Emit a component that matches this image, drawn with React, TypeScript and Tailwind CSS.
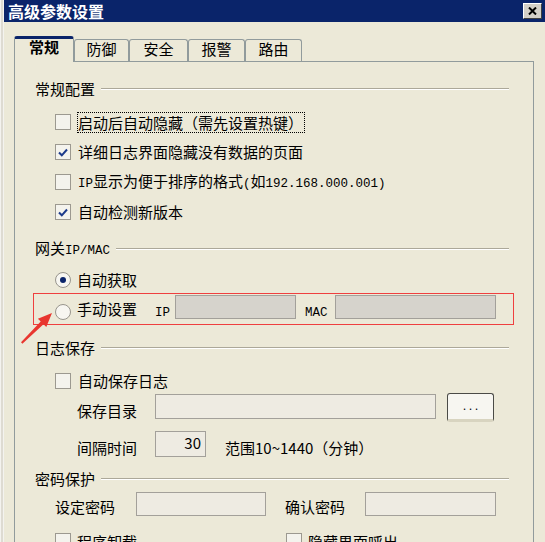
import type { ReactNode } from "react"

const M = ({ children }: { children: ReactNode }) => (
  <span className="font-['Liberation_Mono',monospace] text-[12.5px]">{children}</span>
)

function CheckBox({ checked = false }: { checked?: boolean }) {
  return (
    <div className="w-[16px] h-[16px] shrink-0 border border-[#9c9990] bg-[#f4f3ed] flex items-center justify-center">
      {checked && (
        <svg width="10" height="9" viewBox="0 0 10 9">
          <path d="M1 4.5 L3.8 7.3 L9 1.5" fill="none" stroke="#1c3a8a" strokeWidth="2" />
        </svg>
      )}
    </div>
  )
}

function Radio({ checked = false }: { checked?: boolean }) {
  return (
    <div className="w-[16px] h-[16px] shrink-0 rounded-full border border-[#98958d] bg-[#f7f6f1] flex items-center justify-center">
      {checked && <div className="w-[6px] h-[6px] rounded-full bg-[#0a246a]" />}
    </div>
  )
}

function Header({ children }: { children: ReactNode }) {
  return (
    <div className="flex items-center h-[20px] pl-[20px] pr-[24px]">
      <span className="leading-[20px] whitespace-nowrap">{children}</span>
      <div className="flex-1 ml-[6px] h-[2px] border-t border-[#aca899] border-b border-b-white" />
    </div>
  )
}

function Label({ w, children }: { w: string; children: ReactNode }) {
  return <div className={`${w} h-full flex items-end leading-[18px] whitespace-nowrap`}>{children}</div>
}

export default function App() {
  const tabs = ["防御", "安全", "报警", "路由"]
  const tabW = ["w-[55px]", "w-[59px]", "w-[57px]", "w-[57px]"]

  return (
    <div className="w-[545px] h-[542px] overflow-hidden flex bg-[#ece9d8] text-black text-[15px] font-['Noto_Sans_CJK_SC',sans-serif] relative">
      {/* 窗口左边框 */}
      <div className="w-[4px] shrink-0 bg-[#dedbd2] border-l border-[#f4f3ef] border-r border-[#b4b1a7]" />

      <div className="flex-1 flex flex-col">
        {/* 标题栏 */}
        <div className="h-[22px] shrink-0 bg-[#0a246a] flex items-center justify-between pl-[4px] pr-[3px]">
          <span className="text-white font-bold text-[16px] leading-[20px]">高级参数设置</span>
          <div className="w-[19px] h-[16px] bg-[#d4d0c8] border border-t-white border-l-white border-r-[#404040] border-b-[#404040] flex items-center justify-center">
            <svg width="9" height="8" viewBox="0 0 9 8">
              <path d="M1 0.5 L8 7.5 M8 0.5 L1 7.5" stroke="#000" strokeWidth="2" />
            </svg>
          </div>
        </div>

        <div className="flex-1 flex flex-col pl-[10px] pt-[14px]">
          {/* 选项卡 */}
          <div className="flex items-end h-[25px] relative z-10">
            <div className="w-[60px] h-[26px] -mb-px bg-[#ece9d8] border-t-[3px] border-t-[#0a246a] border-x border-x-[#919b9c] rounded-t-[3px] flex justify-center">
              <span className="font-bold leading-[16px]">常规</span>
            </div>
            {tabs.map((t, i) => (
              <div
                key={t}
                className={`${tabW[i]} h-[22px] border-t border-x border-[#919b9c] rounded-t-[3px] flex justify-center`}
              >
                <span className="leading-[18px]">{t}</span>
              </div>
            ))}
          </div>

          {/* 面板 */}
          <div className="w-[520px] flex-1 border border-b-0 border-[#919b9c] pt-[17px]">
            <Header>常规配置</Header>
            <div className="mt-[8px] pl-[40px]">
              <div className="flex items-center h-[30px]">
                <CheckBox />
                <span className="ml-[6px] h-[21px] leading-[19px] pr-[1px] border border-dotted border-black">
                  启动后自动隐藏（需先设置热键）
                </span>
              </div>
              <div className="flex items-center h-[30px]">
                <CheckBox checked />
                <span className="ml-[7px] leading-[20px]">详细日志界面隐藏没有数据的页面</span>
              </div>
              <div className="flex items-center h-[30px]">
                <CheckBox />
                <span className="ml-[7px] leading-[20px]">
                  <M>IP</M>显示为便于排序的格式<M>(</M>如<M>192.168.000.001)</M>
                </span>
              </div>
              <div className="flex items-center h-[30px]">
                <CheckBox checked />
                <span className="ml-[7px] leading-[20px]">自动检测新版本</span>
              </div>
            </div>

            <div className="mt-[12px]">
              <Header>
                网关<M>IP/MAC</M>
              </Header>
            </div>
            <div className="mt-[8px] h-[26px] pl-[40px] flex items-center">
              <Radio checked />
              <span className="ml-[6px] leading-[20px]">自动获取</span>
            </div>
            <div className="ml-[18px] mr-[19px] h-[32px] border border-[#ef3f3f] pl-[21px] flex items-start">
              <div className="mt-[10px]">
                <Radio />
              </div>
              <span className="ml-[6px] mt-[5px] w-[60px] leading-[20px]">手动设置</span>
              <span className="ml-[18px] mt-[6px] w-[20px] leading-[20px]">
                <M>IP</M>
              </span>
              <div className="mt-[1px] w-[121px] h-[24px] bg-[#d6d3cc] border border-[#a3a09a]" />
              <span className="ml-[9px] mt-[6px] w-[30px] leading-[20px]">
                <M>MAC</M>
              </span>
              <div className="mt-[1px] w-[161px] h-[24px] bg-[#d6d3cc] border border-[#a3a09a]" />
            </div>

            <div className="mt-[13px]">
              <Header>日志保存</Header>
            </div>
            <div className="mt-[10px] h-[26px] pl-[40px] flex items-center">
              <CheckBox />
              <span className="ml-[7px] leading-[20px]">自动保存日志</span>
            </div>
            <div className="h-[26px] pl-[62px] flex items-start">
              <Label w="w-[78px]">保存目录</Label>
              <div className="w-[281px] h-[25px] border border-[#a3a09a] bg-[#eeebe2]" />
              <div className="ml-[11px] -mt-[1px] w-[47px] h-[29px] rounded-[3px] border border-[#4b4b47] bg-[#f7f6f1] border-b-[3px] border-b-[#d8d4c0] flex items-center justify-center">
                <span className="text-[11px] tracking-[3px] leading-none pl-[3px] -mt-[2px]">...</span>
              </div>
            </div>
            <div className="mt-[11px] h-[26px] pl-[62px] flex items-start">
              <Label w="w-[78px]">间隔时间</Label>
              <div className="w-[51px] h-[26px] border border-[#a3a09a] bg-[#eeebe2] flex items-center justify-end pr-[4px] pb-[3px] leading-[18px]">
                30
              </div>
              <div className="ml-[19px] h-full flex items-end leading-[18px]">
                范围10~1440（分钟）
              </div>
            </div>

            <div className="mt-[12px]">
              <Header>密码保护</Header>
            </div>
            <div className="mt-[3px] h-[24px] pl-[40px] flex items-start">
              <Label w="w-[81px]">设定密码</Label>
              <div className="w-[130px] h-[24px] border border-[#a3a09a] bg-[#eeebe2]" />
              <div className="ml-[19px] h-full">
                <Label w="w-[80px]">确认密码</Label>
              </div>
              <div className="w-[131px] h-[24px] border border-[#a3a09a] bg-[#eeebe2]" />
            </div>
            <div className="mt-[17px] pl-[40px] flex items-start">
              <div className="w-[231px] flex items-start">
                <CheckBox />
                <span className="ml-[6px] leading-[18px]">程序卸载</span>
              </div>
              <div className="flex items-start">
                <CheckBox />
                <span className="ml-[6px] leading-[18px]">隐藏界面呼出</span>
              </div>
            </div>
          </div>
        </div>
      </div>

      {/* 红色标注箭头 */}
      <svg className="absolute left-[15px] top-[305px] pointer-events-none" width="45" height="45" viewBox="0 0 45 45">
        <polygon
          points="6,37.3 25.7,16.5 22.9,13.7 37,8 31.3,22.1 28.5,19.3 7.4,38.7"
          fill="#e8362f"
        />
      </svg>
    </div>
  )
}
